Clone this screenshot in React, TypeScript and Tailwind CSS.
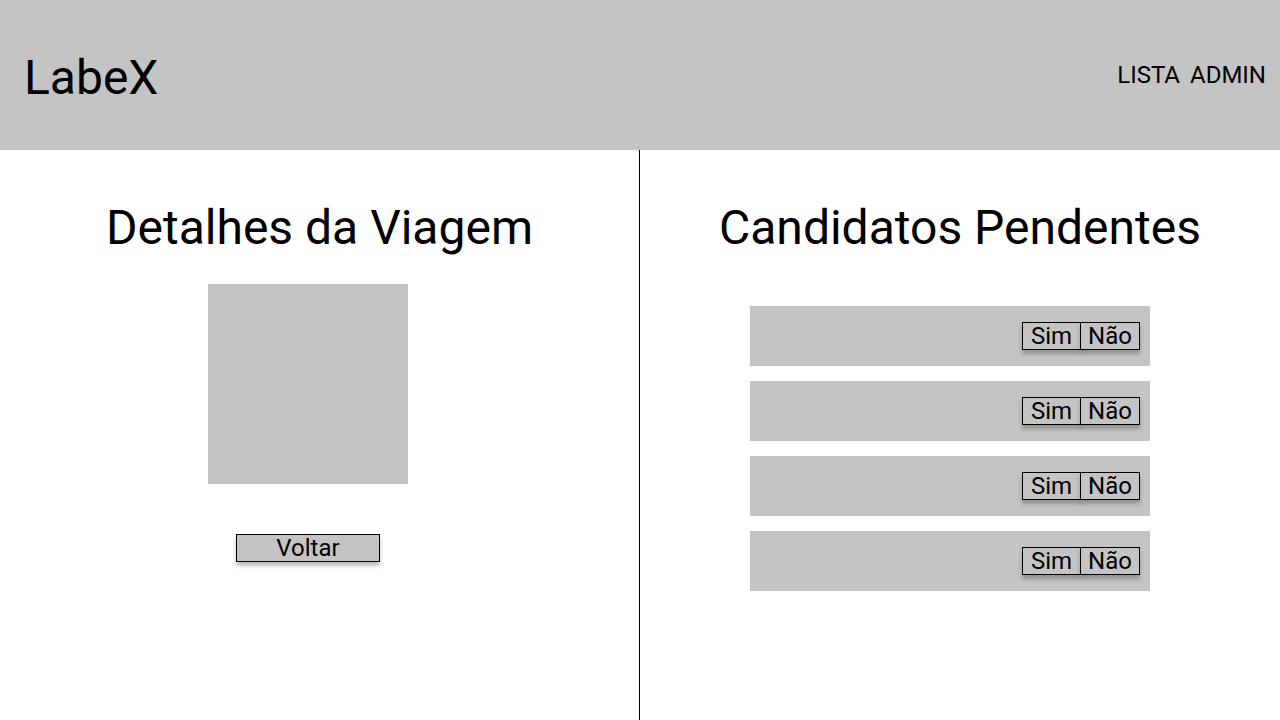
export default function App() {
    const candidates = [1, 2, 3, 4];

    return (
        <div className="flex h-[720px] w-[1280px] flex-col overflow-hidden bg-white font-['Roboto',sans-serif] text-black">
            {/* Header */}
            <header className="flex h-[150px] shrink-0 items-center justify-between bg-[#c4c4c4] pl-[24px] pr-[14px]">
                <h1 className="mt-[6px] text-[48px] leading-[56px]">LabeX</h1>
                <nav className="flex gap-[10px] text-[24px] leading-[28px]">
                    <span>LISTA</span>
                    <span>ADMIN</span>
                </nav>
            </header>

            <main className="grid flex-1 grid-cols-2">
                {/* Left - Trip details */}
                <section className="flex flex-col items-center border-r border-black">
                    <h2 className="mt-[50px] text-[48px] leading-[56px]">Detalhes da Viagem</h2>
                    <div className="flex flex-col items-center pr-[23px]">
                        <div className="mt-[28px] h-[200px] w-[200px] bg-[#c4c4c4]" />
                        <button className="mt-[50px] h-[28px] w-[144px] border border-black bg-[#c4c4c4] text-[24px] leading-[26px] shadow-[0_4px_4px_rgba(0,0,0,0.25)]">
                            Voltar
                        </button>
                    </div>
                </section>

                {/* Right - Pending candidates */}
                <section className="flex flex-col items-center">
                    <h2 className="mt-[50px] text-[48px] leading-[56px]">Candidatos Pendentes</h2>
                    <div className="mt-[50px] flex flex-col gap-[15px] pr-[20px]">
                        {candidates.map((c) => (
                            <div key={c} className="flex h-[60px] w-[400px] items-center justify-end bg-[#c4c4c4] pr-[10px]">
                                <div className="flex">
                                    <button className="h-[28px] w-[59px] border border-black bg-[#c4c4c4] text-[24px] leading-[26px] shadow-[0_4px_4px_rgba(0,0,0,0.25)]">
                                        Sim
                                    </button>
                                    <button className="-ml-px h-[28px] w-[60px] border border-black bg-[#c4c4c4] text-[24px] leading-[26px] shadow-[0_4px_4px_rgba(0,0,0,0.25)]">
                                        Não
                                    </button>
                                </div>
                            </div>
                        ))}
                    </div>
                </section>
            </main>
        </div>
    );
}
